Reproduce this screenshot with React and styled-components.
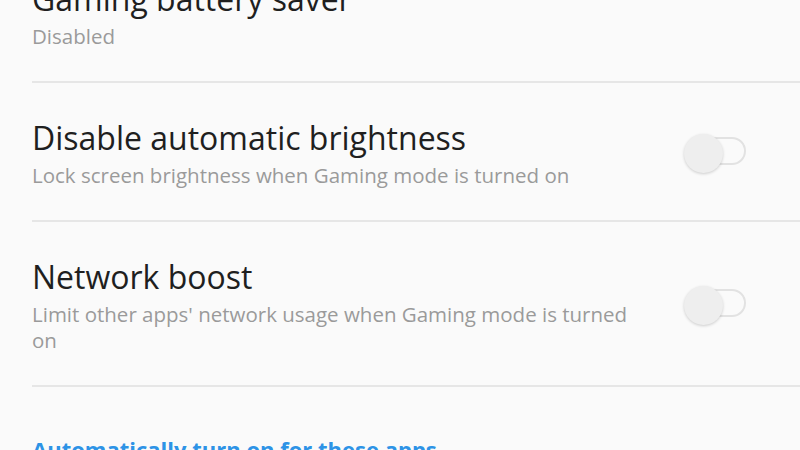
import React from "react";
import styled, { createGlobalStyle } from "styled-components";

const GlobalStyle = createGlobalStyle`
  html, body {
    margin: 0;
    padding: 0;
    background: #fafafa;
    overflow: hidden;
  }
  body {
    font-family: "Open Sans", "Noto Sans", sans-serif;
  }
`;

const Screen = styled.div`
  width: 800px;
  height: 450px;
  overflow: hidden;
  background: #fafafa;
`;

const List = styled.div`
  display: flex;
  flex-direction: column;
  margin-top: -56px;
`;

const Row = styled.div`
  display: flex;
  align-items: center;
  margin-left: 32px;
  padding: 36px 54px 32px 0;
  border-bottom: 2px solid #e6e6e6;
`;

const Texts = styled.div`
  flex: 1;
  max-width: 605px;
  display: flex;
  flex-direction: column;
`;

const Title = styled.div`
  font-size: 32px;
  line-height: 38px;
  color: #1f1f1f;
`;

const Summary = styled.div`
  margin-top: 5px;
  font-size: 20.5px;
  line-height: 26px;
  color: #9a9a9a;
`;

const Switch = styled.div`
  margin-left: auto;
  position: relative;
  width: 62px;
  height: 40px;
  flex-shrink: 0;
`;

const Track = styled.div`
  position: absolute;
  left: 10px;
  right: 0;
  top: 3px;
  height: 28px;
  border: 2px solid #e2e2e2;
  border-radius: 14px;
  box-sizing: border-box;
`;

const Knob = styled.div`
  position: absolute;
  left: 0;
  top: 0;
  width: 39px;
  height: 39px;
  border-radius: 50%;
  background: #eeeeee;
  box-shadow: 0 1px 3px rgba(0, 0, 0, 0.18);
`;

const Category = styled.div`
  padding: 48px 32px 0;
  font-size: 22px;
  line-height: 28px;
  font-weight: 700;
  color: #2d93e6;
`;

const items = [
  { title: "Gaming battery saver", summary: "Disabled" },
  {
    title: "Disable automatic brightness",
    summary: "Lock screen brightness when Gaming mode is turned on",
    toggle: true,
  },
  {
    title: "Network boost",
    summary: "Limit other apps' network usage when Gaming mode is turned on",
    toggle: true,
  },
];

function Toggle() {
  return (
    <Switch>
      <Track />
      <Knob />
    </Switch>
  );
}

export default function App() {
  return (
    <Screen>
      <GlobalStyle />
      <List>
        {items.map((item) => (
          <Row key={item.title}>
            <Texts>
              <Title>{item.title}</Title>
              <Summary>{item.summary}</Summary>
            </Texts>
            {item.toggle && <Toggle />}
          </Row>
        ))}
        <Category>Automatically turn on for these apps</Category>
      </List>
    </Screen>
  );
}
